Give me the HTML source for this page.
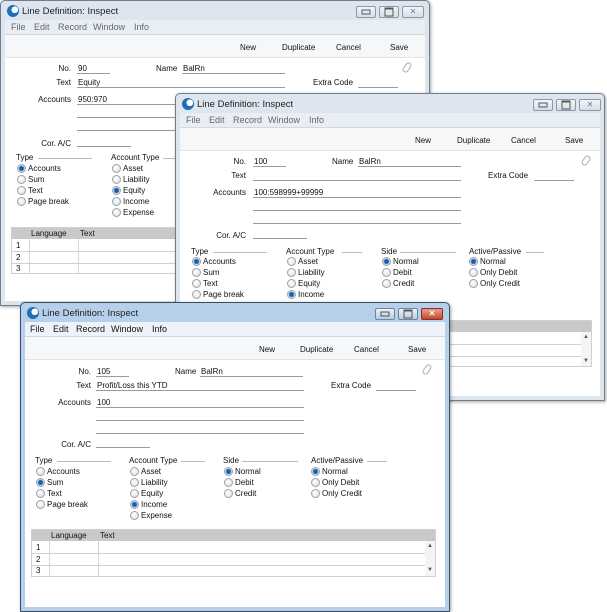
<!DOCTYPE html>
<html><head><meta charset="utf-8">
<style>
*{box-sizing:border-box;margin:0;padding:0}
body{width:607px;height:610px;background:#fff;position:relative;overflow:hidden;font-family:"Liberation Sans",Tahoma,sans-serif;font-size:8px;color:#111}
.win{position:absolute;width:430px;height:308px;border:1px solid #6f7d8c;background:#dde6ef;overflow:hidden;border-radius:5px 5px 0 0;box-shadow:1px 1px 3px rgba(0,0,0,.35)}
.win.act{background:#b6cfea;border-color:#3a4d63}
.win .t{position:absolute}
.title{left:21px;top:5px;font-size:9.5px;color:#222}
.ico{position:absolute;left:6px;top:4px;width:12px;height:12px;border-radius:50%;background:radial-gradient(circle at 65% 40%,#fff 30%,#1d6fb8 32%)}
.wb{position:absolute;top:5px;height:12px;border:1px solid #8a99aa;border-radius:2px;background:linear-gradient(#f2f5f8,#d6dee6)}
.act .wb{background:linear-gradient(#e9f1f9,#b9cde2);border-color:#6f86a0}
.act .wb.cl{background:linear-gradient(#e8a090,#c8452f);border-color:#8a3020}
.wb::after{content:"";position:absolute;left:50%;top:50%;transform:translate(-50%,-50%)}
.wb.mn::after{width:7px;height:3px;border:1px solid #555}
.wb.mx::after{width:7px;height:6px;border:1px solid #555;border-top-width:2px}
.wb.cl::after{content:"✕";font-size:8px;color:#777;line-height:1}
.act .wb.cl::after{color:#fff;font-weight:bold}
.menu{position:absolute;left:4px;right:4px;top:19px;height:15px;background:#e9eef5;border-bottom:1px solid #d0d8e2;font-size:9px}
.act .menu{background:#eef3f9}
.menu span{position:absolute;top:2px;color:#666}
.act .menu span{color:#111}
.client{position:absolute;left:4px;right:4px;top:34px;bottom:4px;background:#fff}
.tb{position:absolute;left:4px;right:4px;top:34px;height:23px;background:#f6f7f8;border-bottom:1px solid #e2e4e7}
.tb span{position:absolute;top:8px}
.lbl{position:absolute;text-align:right}
.val{position:absolute}
.ul{position:absolute;height:1px;background:#9a9a9a}
.hd{position:absolute}
.hl{position:absolute;height:1px;background:#bbb}
.r{position:absolute;width:9px;height:9px;border-radius:50%;border:1px solid #9aa2aa;background:radial-gradient(circle at 40% 35%,#fff,#d8dcdf)}
.r.on{background:radial-gradient(circle,#1c5fa8 0 2px,#5a9ad8 2.5px,#e8eef4 3.2px)}
.rl{position:absolute}
.tbl{position:absolute;left:10px;top:226px;width:405px;height:47px;border:1px solid #d0d0d0;background:#fff}
.tbl .h{position:absolute;left:0;right:0;top:0;height:11px;background:#c9c9c9}
.tbl .h span{position:absolute;top:1px}
.tbl .row{position:absolute;left:0;right:10px;height:1px;background:#d0d0d0}
.tbl .vc{position:absolute;top:11px;bottom:0;width:1px;background:#d6d6d6}
.tbl .n{position:absolute;left:4px}
.clip{position:absolute;left:403px;top:61px;width:6px;height:11px;border:1.5px solid #aaa;border-radius:3px;transform:rotate(35deg)}
.sb{position:absolute;right:0;top:11px;bottom:0;width:10px;background:#f4f4f4;font-size:6px;color:#555;text-align:center}
</style></head><body>

<!-- Window 1 -->
<div class="win" style="left:0;top:0;height:306px">
<div class="ico"></div><div class="t title">Line Definition: Inspect</div>
<div class="wb mn" style="left:355px;width:20px"></div><div class="wb mx" style="left:378px;width:20px"></div><div class="wb cl" style="left:401px;width:22px"></div>
<div class="menu"><span style="left:6px">File</span><span style="left:29px">Edit</span><span style="left:53px">Record</span><span style="left:88px">Window</span><span style="left:129px">Info</span></div>
<div class="client"></div>
<div class="tb"><span style="left:235px">New</span><span style="left:277px">Duplicate</span><span style="left:331px">Cancel</span><span style="left:385px">Save</span></div>
<div class="lbl" style="left:40px;width:30px;top:63px">No.</div><div class="val" style="left:77px;top:63px">90</div><div class="ul" style="left:76px;width:33px;top:72px"></div>
<div class="val" style="left:155px;top:63px">Name</div><div class="val" style="left:182px;top:63px">BalRn</div><div class="ul" style="left:181px;width:103px;top:72px"></div>
<div class="clip"></div>
<div class="lbl" style="left:30px;width:40px;top:77px">Text</div><div class="val" style="left:77px;top:77px">Equity</div><div class="ul" style="left:76px;width:208px;top:86px"></div>
<div class="val" style="left:312px;top:77px">Extra Code</div><div class="ul" style="left:357px;width:40px;top:86px"></div>
<div class="lbl" style="left:20px;width:50px;top:94px">Accounts</div><div class="val" style="left:77px;top:94px">950:970</div><div class="ul" style="left:76px;width:208px;top:103px"></div>
<div class="ul" style="left:76px;width:208px;top:116px"></div><div class="ul" style="left:76px;width:208px;top:129px"></div>
<div class="lbl" style="left:20px;width:50px;top:138px">Cor. A/C</div><div class="ul" style="left:76px;width:54px;top:145px"></div>
<div class="hd" style="left:15px;top:152px">Type</div><div class="hl" style="left:37px;width:54px;top:157px"></div>
<div class="r on" style="left:16px;top:163px"></div><div class="rl" style="left:27px;top:163px">Accounts</div>
<div class="r" style="left:16px;top:174px"></div><div class="rl" style="left:27px;top:174px">Sum</div>
<div class="r" style="left:16px;top:185px"></div><div class="rl" style="left:27px;top:185px">Text</div>
<div class="r" style="left:16px;top:196px"></div><div class="rl" style="left:27px;top:196px">Page break</div>
<div class="hd" style="left:110px;top:152px">Account Type</div><div class="hl" style="left:162px;width:15px;top:157px"></div>
<div class="r" style="left:111px;top:163px"></div><div class="rl" style="left:122px;top:163px">Asset</div>
<div class="r" style="left:111px;top:174px"></div><div class="rl" style="left:122px;top:174px">Liability</div>
<div class="r on" style="left:111px;top:185px"></div><div class="rl" style="left:122px;top:185px">Equity</div>
<div class="r" style="left:111px;top:196px"></div><div class="rl" style="left:122px;top:196px">Income</div>
<div class="r" style="left:111px;top:207px"></div><div class="rl" style="left:122px;top:207px">Expense</div>
<div class="tbl"><div class="h"><span style="left:19px">Language</span><span style="left:68px">Text</span></div>
<div class="vc" style="left:17px"></div><div class="vc" style="left:66px"></div>
<div class="row" style="top:23px"></div><div class="row" style="top:35px"></div>
<div class="n" style="top:13px">1</div><div class="n" style="top:25px">2</div><div class="n" style="top:36px">3</div></div>
</div>

<!-- Window 2 -->
<div class="win" style="left:175px;top:93px;height:308px">
<div class="ico"></div><div class="t title">Line Definition: Inspect</div>
<div class="wb mn" style="left:357px;width:20px"></div><div class="wb mx" style="left:380px;width:20px"></div><div class="wb cl" style="left:403px;width:22px"></div>
<div class="menu"><span style="left:6px">File</span><span style="left:29px">Edit</span><span style="left:53px">Record</span><span style="left:88px">Window</span><span style="left:129px">Info</span></div>
<div class="client"></div>
<div class="tb"><span style="left:235px">New</span><span style="left:277px">Duplicate</span><span style="left:331px">Cancel</span><span style="left:385px">Save</span></div>
<div class="lbl" style="left:40px;width:30px;top:63px">No.</div><div class="val" style="left:78px;top:63px">100</div><div class="ul" style="left:77px;width:33px;top:72px"></div>
<div class="val" style="left:156px;top:63px">Name</div><div class="val" style="left:183px;top:63px">BalRn</div><div class="ul" style="left:182px;width:103px;top:72px"></div>
<div class="clip" style="left:407px"></div>
<div class="lbl" style="left:30px;width:40px;top:77px">Text</div><div class="ul" style="left:77px;width:208px;top:86px"></div>
<div class="val" style="left:312px;top:77px">Extra Code</div><div class="ul" style="left:358px;width:40px;top:86px"></div>
<div class="lbl" style="left:20px;width:50px;top:94px">Accounts</div><div class="val" style="left:78px;top:94px">100:598999+99999</div><div class="ul" style="left:77px;width:208px;top:103px"></div>
<div class="ul" style="left:77px;width:208px;top:116px"></div><div class="ul" style="left:77px;width:208px;top:129px"></div>
<div class="lbl" style="left:20px;width:50px;top:137px">Cor. A/C</div><div class="ul" style="left:77px;width:54px;top:144px"></div>
<div class="hd" style="left:15px;top:153px">Type</div><div class="hl" style="left:37px;width:54px;top:158px"></div>
<div class="r on" style="left:16px;top:163px"></div><div class="rl" style="left:27px;top:163px">Accounts</div>
<div class="r" style="left:16px;top:174px"></div><div class="rl" style="left:27px;top:174px">Sum</div>
<div class="r" style="left:16px;top:185px"></div><div class="rl" style="left:27px;top:185px">Text</div>
<div class="r" style="left:16px;top:196px"></div><div class="rl" style="left:27px;top:196px">Page break</div>
<div class="hd" style="left:110px;top:153px">Account Type</div><div class="hl" style="left:166px;width:20px;top:158px"></div>
<div class="r" style="left:111px;top:163px"></div><div class="rl" style="left:122px;top:163px">Asset</div>
<div class="r" style="left:111px;top:174px"></div><div class="rl" style="left:122px;top:174px">Liability</div>
<div class="r" style="left:111px;top:185px"></div><div class="rl" style="left:122px;top:185px">Equity</div>
<div class="r on" style="left:111px;top:196px"></div><div class="rl" style="left:122px;top:196px">Income</div>
<div class="hd" style="left:205px;top:153px">Side</div><div class="hl" style="left:224px;width:56px;top:158px"></div>
<div class="r on" style="left:206px;top:163px"></div><div class="rl" style="left:217px;top:163px">Normal</div>
<div class="r" style="left:206px;top:174px"></div><div class="rl" style="left:217px;top:174px">Debit</div>
<div class="r" style="left:206px;top:185px"></div><div class="rl" style="left:217px;top:185px">Credit</div>
<div class="hd" style="left:293px;top:153px">Active/Passive</div><div class="hl" style="left:350px;width:18px;top:158px"></div>
<div class="r on" style="left:293px;top:163px"></div><div class="rl" style="left:304px;top:163px">Normal</div>
<div class="r" style="left:293px;top:174px"></div><div class="rl" style="left:304px;top:174px">Only Debit</div>
<div class="r" style="left:293px;top:185px"></div><div class="rl" style="left:304px;top:185px">Only Credit</div>
<div class="tbl" style="top:226px;width:406px"><div class="h"></div>
<div class="row" style="top:23px"></div><div class="row" style="top:35px"></div>
<div class="sb"><div style="margin-top:2px">▲</div><div style="margin-top:18px">▼</div></div></div>
</div>

<!-- Window 3 (active) -->
<div class="win act" style="left:20px;top:302px;height:310px">
<div class="ico"></div><div class="t title">Line Definition: Inspect</div>
<div class="wb mn" style="left:354px;width:20px"></div><div class="wb mx" style="left:377px;width:20px"></div><div class="wb cl" style="left:400px;width:22px"></div>
<div class="menu"><span style="left:5px">File</span><span style="left:28px">Edit</span><span style="left:51px">Record</span><span style="left:86px">Window</span><span style="left:127px">Info</span></div>
<div class="client"></div>
<div class="tb"><span style="left:234px">New</span><span style="left:275px">Duplicate</span><span style="left:329px">Cancel</span><span style="left:383px">Save</span></div>
<div class="lbl" style="left:40px;width:30px;top:64px">No.</div><div class="val" style="left:76px;top:64px">105</div><div class="ul" style="left:75px;width:33px;top:73px"></div>
<div class="val" style="left:154px;top:64px">Name</div><div class="val" style="left:180px;top:64px">BalRn</div><div class="ul" style="left:179px;width:103px;top:73px"></div>
<div class="clip"></div>
<div class="lbl" style="left:30px;width:40px;top:78px">Text</div><div class="val" style="left:76px;top:78px">Profit/Loss this YTD</div><div class="ul" style="left:75px;width:208px;top:87px"></div>
<div class="val" style="left:310px;top:78px">Extra Code</div><div class="ul" style="left:355px;width:40px;top:87px"></div>
<div class="lbl" style="left:20px;width:50px;top:95px">Accounts</div><div class="val" style="left:76px;top:95px">100</div><div class="ul" style="left:75px;width:208px;top:104px"></div>
<div class="ul" style="left:75px;width:208px;top:117px"></div><div class="ul" style="left:75px;width:208px;top:130px"></div>
<div class="lbl" style="left:20px;width:50px;top:137px">Cor. A/C</div><div class="ul" style="left:75px;width:54px;top:144px"></div>
<div class="hd" style="left:14px;top:153px">Type</div><div class="hl" style="left:36px;width:54px;top:158px"></div>
<div class="r" style="left:15px;top:164px"></div><div class="rl" style="left:26px;top:164px">Accounts</div>
<div class="r on" style="left:15px;top:175px"></div><div class="rl" style="left:26px;top:175px">Sum</div>
<div class="r" style="left:15px;top:186px"></div><div class="rl" style="left:26px;top:186px">Text</div>
<div class="r" style="left:15px;top:197px"></div><div class="rl" style="left:26px;top:197px">Page break</div>
<div class="hd" style="left:108px;top:153px">Account Type</div><div class="hl" style="left:160px;width:24px;top:158px"></div>
<div class="r" style="left:109px;top:164px"></div><div class="rl" style="left:120px;top:164px">Asset</div>
<div class="r" style="left:109px;top:175px"></div><div class="rl" style="left:120px;top:175px">Liability</div>
<div class="r" style="left:109px;top:186px"></div><div class="rl" style="left:120px;top:186px">Equity</div>
<div class="r on" style="left:109px;top:197px"></div><div class="rl" style="left:120px;top:197px">Income</div>
<div class="r" style="left:109px;top:208px"></div><div class="rl" style="left:120px;top:208px">Expense</div>
<div class="hd" style="left:202px;top:153px">Side</div><div class="hl" style="left:221px;width:56px;top:158px"></div>
<div class="r on" style="left:203px;top:164px"></div><div class="rl" style="left:214px;top:164px">Normal</div>
<div class="r" style="left:203px;top:175px"></div><div class="rl" style="left:214px;top:175px">Debit</div>
<div class="r" style="left:203px;top:186px"></div><div class="rl" style="left:214px;top:186px">Credit</div>
<div class="hd" style="left:290px;top:153px">Active/Passive</div><div class="hl" style="left:346px;width:20px;top:158px"></div>
<div class="r on" style="left:290px;top:164px"></div><div class="rl" style="left:301px;top:164px">Normal</div>
<div class="r" style="left:290px;top:175px"></div><div class="rl" style="left:301px;top:175px">Only Debit</div>
<div class="r" style="left:290px;top:186px"></div><div class="rl" style="left:301px;top:186px">Only Credit</div>
<div class="tbl" style="top:226px;width:405px;height:48px"><div class="h"><span style="left:19px">Language</span><span style="left:68px">Text</span></div>
<div class="vc" style="left:17px"></div><div class="vc" style="left:66px"></div>
<div class="row" style="top:23px"></div><div class="row" style="top:35px"></div>
<div class="n" style="top:13px">1</div><div class="n" style="top:25px">2</div><div class="n" style="top:36px">3</div>
<div class="sb"><div style="margin-top:2px">▲</div><div style="margin-top:18px">▼</div></div></div>
</div>

</body></html>
